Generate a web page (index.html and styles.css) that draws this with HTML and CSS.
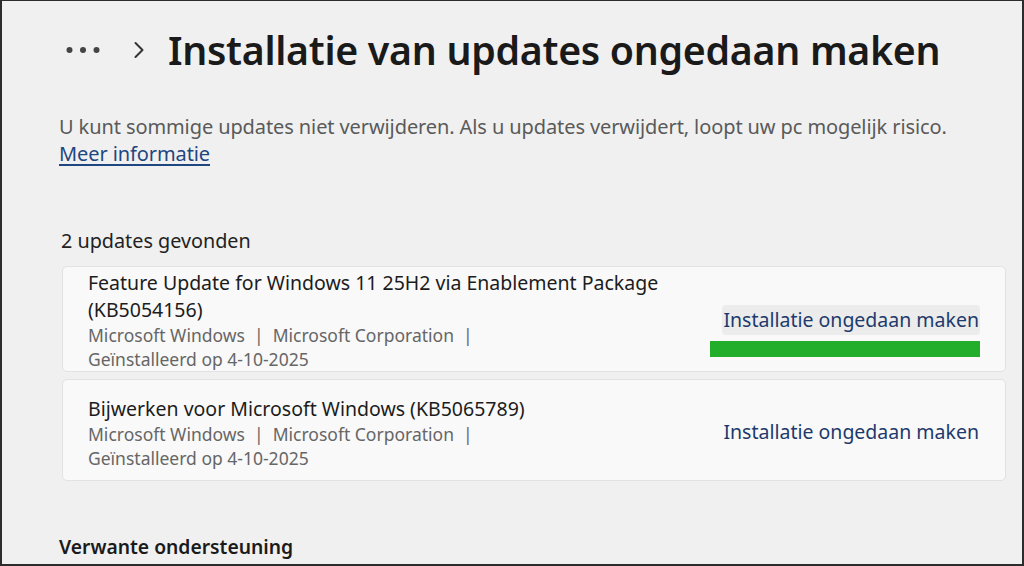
FILE: index.html
```html
<!DOCTYPE html>
<html lang="nl">
<head>
<meta charset="utf-8">
<title>Installatie van updates ongedaan maken</title>
<link rel="stylesheet" href="styles.css">
</head>
<body>
<div class="frame">
  <div class="page">
    <header class="header">
      <span class="more" aria-label="Meer">
        <svg width="34" height="8" viewBox="0 0 34 8"><circle cx="3.5" cy="4" r="3" fill="#444"/><circle cx="17" cy="4" r="3" fill="#444"/><circle cx="30.5" cy="4" r="3" fill="#444"/></svg>
      </span>
      <span class="chev">
        <svg width="14" height="18" viewBox="0 0 14 18"><path d="M3.5 2 L10.5 9 L3.5 16" fill="none" stroke="#333" stroke-width="2" stroke-linecap="round" stroke-linejoin="round"/></svg>
      </span>
      <h1 class="title">Installatie van updates ongedaan maken</h1>
    </header>

    <p class="desc">U kunt sommige updates niet verwijderen. Als u updates verwijdert, loopt uw pc mogelijk risico.<br><a class="link" href="#">Meer informatie</a></p>

    <h2 class="count">2 updates gevonden</h2>

    <div class="list">
      <div class="card card-first">
        <div class="info">
          <div class="name">Feature Update for Windows 11 25H2 via Enablement Package (KB5054156)</div>
          <div class="meta">Microsoft Windows&nbsp; |&nbsp; Microsoft Corporation&nbsp; | Geïnstalleerd op 4-10-2025</div>
        </div>
        <div class="action">
          <button class="btn btn-hover">Installatie ongedaan maken</button>
          <span class="highlight"></span>
        </div>
      </div>
      <div class="card">
        <div class="info">
          <div class="name">Bijwerken voor Microsoft Windows (KB5065789)</div>
          <div class="meta">Microsoft Windows&nbsp; |&nbsp; Microsoft Corporation&nbsp; | Geïnstalleerd op 4-10-2025</div>
        </div>
        <div class="action">
          <button class="btn">Installatie ongedaan maken</button>
        </div>
      </div>
    </div>

    <h2 class="related">Verwante ondersteuning</h2>
  </div>
</div>
</body>
</html>
```
FILE: styles.css
```css
* { box-sizing: border-box; }
html, body { margin: 0; padding: 0; }
body {
  width: 1024px;
  height: 566px;
  overflow: hidden;
  background: #f0f0f0;
  font-family: "Noto Sans", "Open Sans", sans-serif;
  color: #1b1b1b;
}
.frame {
  width: 1024px;
  height: 566px;
  border-top: 1px solid #2c2c2c;
  border-left: 2px solid #2c2c2c;
  border-right: 2px solid #2c2c2c;
  border-bottom: 2px solid #2c2c2c;
  background: #f0f0f0;
  overflow: hidden;
}
.page {
  padding: 0 16px 0 57px;
}
.header {
  display: flex;
  align-items: center;
  height: 98px;
}
.more {
  display: flex;
  margin-left: 7px;
  width: 34px;
}
.chev {
  display: flex;
  margin-left: 32px;
  margin-right: 22px;
}
.title {
  margin: 0;
  font-size: 39.3px;
  font-weight: 600;
  letter-spacing: -0.3px;
  color: #1a1a1a;
  line-height: 52px;
}
.desc {
  margin: 14px 0 0;
  font-size: 20px;
  line-height: 27px;
  color: #5a5a5a;
  letter-spacing: -0.1px;
}
.link {
  color: #1e4680;
  text-decoration: underline;
  text-underline-offset: 3px;
}
.count {
  margin: 61px 0 0 2px;
  font-size: 19.8px;
  font-weight: 400;
  line-height: 26px;
  color: #222;
}
.list {
  margin: 12px 0 0 3px;
  display: flex;
  flex-direction: column;
  gap: 7px;
}
.card {
  display: flex;
  align-items: center;
  justify-content: space-between;
  background: #f9f9f9;
  border: 1px solid #e2e2e2;
  border-radius: 5px;
  min-height: 102px;
  padding: 4px 25px 0 25px;
}
.card-first {
  min-height: 106px;
  padding-top: 2px;
}
.info { max-width: 620px; }
.name {
  font-size: 19.5px;
  line-height: 27px;
  color: #1c1c1c;
}
.meta {
  font-size: 17.5px;
  line-height: 24px;
  color: #666;
  max-width: 440px;
}
.action {
  position: relative;
  display: flex;
  align-items: center;
}
.btn {
  font-family: inherit;
  font-size: 19.5px;
  color: #1d3a6c;
  background: transparent;
  border: 0;
  border-radius: 4px;
  padding: 3px 1px;
  line-height: 24px;
  cursor: pointer;
}
.btn-hover { background: #ececec; }
.highlight {
  position: absolute;
  right: 0;
  top: 36px;
  width: 270px;
  height: 16px;
  background: #22ad2a;
}
.related {
  margin: 53px 0 0 0;
  font-size: 19.3px;
  font-weight: 600;
  color: #1a1a1a;
  line-height: 26px;
}
```
